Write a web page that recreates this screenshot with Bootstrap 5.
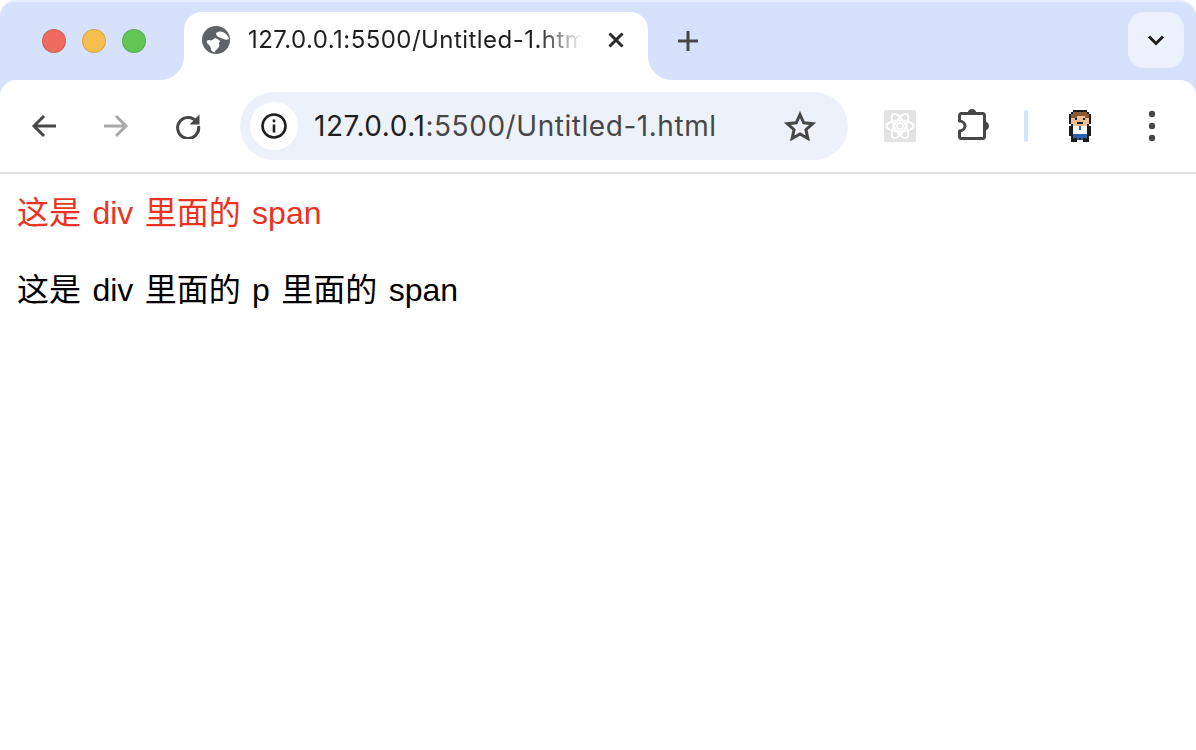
<!doctype html>
<html lang="zh"><head><meta charset="utf-8">
<link href="https://cdn.jsdelivr.net/npm/bootstrap@5.3.0/dist/css/bootstrap.min.css" rel="stylesheet">
<style>
html,body{margin:0;background:#fff;height:100%;}
.win{--strip:#d6e2fb;--ink:#474747;}
.strip{height:80px;background:var(--strip);border-top:2px solid #e6edfc;border-radius:16px 16px 0 0;padding-top:10px;}
.lights{width:184px;padding-left:42px;height:58px;gap:16px;}
.light{width:24px;height:24px;border-radius:50%;border:1px solid rgba(0,0,0,.12);}
.l-r{background:#ef6a5f}.l-y{background:#f6bd4f}.l-g{background:#62c655}
.tabb{width:464px;height:68px;background:#fff;border-radius:18px 18px 0 0;position:relative;padding:0 23px 12px 18px;}
.tabb::before,.tabb::after{content:"";position:absolute;bottom:0;width:24px;height:24px;}
.tabb::before{left:-24px;background:radial-gradient(circle at 0 0,var(--strip) 23.5px,#fff 24.5px);}
.tabb::after{right:-24px;background:radial-gradient(circle at 100% 0,var(--strip) 23.5px,#fff 24.5px);}
.tabt{font:24px/1.2 Inter,"Liberation Sans",sans-serif;color:#1f1f1f;width:335px;margin-left:18px;white-space:nowrap;overflow:hidden;-webkit-mask-image:linear-gradient(90deg,#000 290px,transparent 335px);mask-image:linear-gradient(90deg,#000 290px,transparent 335px);letter-spacing:.45px;}
.chev{width:56px;height:56px;background:#ebf1fd;border-radius:16px;margin-right:12px;}
.tool{height:92px;background:#fff;position:relative;border-radius:16px 16px 0 0;padding-left:20px;}
.toolw{background:var(--strip);border-bottom:2px solid #e0e0e0;}
.tbtn{width:48px;height:48px;margin-right:24px;}
.tbtn:nth-child(3){margin-right:28px}
.omni{width:608px;height:68px;background:#edf2fa;border-radius:34px;padding:0 32px 0 10px;}
.info{width:48px;height:48px;background:#fff;border-radius:50%;margin-right:16px;}
.url{font:28px/1.2 Inter,"Liberation Sans",sans-serif;color:#474747;white-space:nowrap;letter-spacing:.55px;padding-top:2px;}
.url b{font-weight:400;color:#1f1f1f;}
.page{padding:17px;font:32px/45px "Liberation Sans","Noto Sans CJK SC",sans-serif;color:#000;word-spacing:2.5px;}
.page p{margin:32px 0;}
.redt{color:#ea3323;}
.sep{width:4px;height:32px;background:#d3e3fd;border-radius:2px;}
.pix{filter:blur(.35px);}
</style></head><body>
<div class="win">
<div class="strip d-flex align-items-start">
  <div class="lights d-flex align-items-center"><span class="light l-r"></span><span class="light l-y"></span><span class="light l-g"></span></div>
  <div class="tabb d-flex align-items-center">
    <svg width="28" height="28" viewBox="0 0 28 28" class="flex-shrink-0"><circle cx="14" cy="14" r="14" fill="#5f6368"/><path d="M14 7C17 4.500 21 5 24 8c1.500 1.500 2.500 3 3 5-3 1.500-6 0-8-1-2-1-5-1.500-5-5zM13 12c2 1 5 2 5 3.500-2 1.500 0 3.500-1 5.500-1.500 2-3.500 3-4.500 5.500-1.500-.5-2.500-1.500-3.500-2.500 0-3-1-4-3-6-2-2-1-4 1-4 2 1 4 0 6-2z" fill="#fff"/></svg>
    <div class="tabt">127.0.0.1:5500/Untitled-1.html</div>
    <svg width="18" height="18" viewBox="0 0 18 18" class="ms-auto flex-shrink-0"><path d="M2.500 2.500l13 13M15.500 2.500l-13 13" stroke="#2b2b2b" stroke-width="3"/></svg>
  </div>
  <div class="d-flex align-items-center justify-content-center" style="width:80px;height:58px"><svg width="22" height="22" viewBox="0 0 22 22"><path d="M11 1v20M1 11h20" stroke="#474747" stroke-width="3"/></svg></div>
  <div class="chev ms-auto d-flex align-items-center justify-content-center"><svg width="18" height="12" viewBox="0 0 18 12"><path d="M2 2.500l7 7 7-7" fill="none" stroke="#1f1f1f" stroke-width="3"/></svg></div>
</div>
<div class="toolw"><div class="tool d-flex align-items-center">
  <div class="tbtn d-flex align-items-center justify-content-center"><svg width="26" height="24" viewBox="0 0 26 24"><path d="M25 12H3M13 2L3 12l10 10" fill="none" stroke="#474747" stroke-width="3"/></svg></div>
  <div class="tbtn d-flex align-items-center justify-content-center"><svg width="26" height="24" viewBox="0 0 26 24"><path d="M1 12h22M13 2l10 10-10 10" fill="none" stroke="#a9a9a9" stroke-width="3"/></svg></div>
  <div class="tbtn d-flex align-items-center justify-content-center"><svg width="26" height="26" viewBox="0 0 26 26"><path d="M21.500 8.500A10.500 10.500 0 1 0 23.500 13" fill="none" stroke="#474747" stroke-width="3"/><path d="M24.500 1.500v10h-10z" fill="#474747"/></svg></div>
  <div class="omni d-flex align-items-center">
    <div class="info d-flex align-items-center justify-content-center"><svg width="28" height="28" viewBox="0 0 28 28"><circle cx="14" cy="14" r="11.500" fill="none" stroke="#1f1f1f" stroke-width="2.600"/><path d="M12.700 12.500h2.600v8h-2.600zM12.700 7.500h2.600v2.700h-2.600z" fill="#1f1f1f"/></svg></div>
    <div class="url"><b>127.0.0.1</b>:5500/Untitled-1.html</div>
    <svg width="32" height="30" viewBox="0 0 32 30" class="ms-auto"><path d="M16 3.500l3.700 8.300 9 .9-6.800 6 2 8.800L16 23l-7.900 4.500 2-8.800-6.800-6 9-.9z" fill="none" stroke="#474747" stroke-width="3"/></svg>
  </div>
  <svg width="32" height="32" viewBox="0 0 32 32" style="margin-left:36px"><rect width="32" height="32" rx="2" fill="#e3e3e3"/><g fill="none" stroke="#fff" stroke-width="1.800"><ellipse cx="16" cy="16" rx="13.500" ry="5.500"/><ellipse cx="16" cy="16" rx="13.500" ry="5.500" transform="rotate(60 16 16)"/><ellipse cx="16" cy="16" rx="13.500" ry="5.500" transform="rotate(120 16 16)"/><circle cx="16" cy="16" r="3"/></g></svg>
  <svg width="36" height="38" viewBox="0 0 36 38" style="margin-left:41px"><path d="M4.500 6.500h21a2 2 0 0 1 2 2v21a2 2 0 0 1-2 2h-21a2 2 0 0 1-2-2V24c3.500-.3 5.500-2.800 5.500-5s-2-4.700-5.500-5V8.500a2 2 0 0 1 2-2z" fill="none" stroke="#474747" stroke-width="3" stroke-linejoin="round"/><path d="M10.500 6.500a4.500 4.500 0 0 1 9 0zM27.500 14.500a4.500 4.500 0 0 1 0 9z" fill="#474747"/></svg>
  <span class="sep" style="margin-left:31px"></span>
  <svg class="pix" width="22" height="32" viewBox="0 0 11 16" style="margin-left:41px"><path fill="#1c1c1c" d="M2 0h7v1h1v1h1v5h-1v1h1v5h-1v3H7v-1H4v1H1v-3H0V8h1V7H0V2h1V1h1z"/><path fill="#8a5a33" d="M2 1h7v1h1v2H8V3H4v1H1V2h1z"/><path fill="#efbe96" d="M1 4h3V3h4v1h2v3H9v1H2V7H1z"/><path fill="#1c1c1c" d="M3 4h1v1H3zM7 4h1v1H7zM4 6h3v1H4z"/><path fill="#fff" d="M2 8h7v4H2z"/><path fill="#2a62b0" d="M5 8h1v2H5zM2 12h7v2H7v1H6v-1H5v1H4v-1H2z"/></svg>
  <svg width="8" height="32" viewBox="0 0 8 32" style="margin-left:57px"><circle cx="4" cy="4" r="3.200" fill="#474747"/><circle cx="4" cy="16" r="3.200" fill="#474747"/><circle cx="4" cy="28" r="3.200" fill="#474747"/></svg>
</div></div>
</div>
<div class="page">
  <div><span class="redt">这是 div 里面的 span</span></div>
  <p>这是 div 里面的 p 里面的 span</p>
</div>
</body></html>
